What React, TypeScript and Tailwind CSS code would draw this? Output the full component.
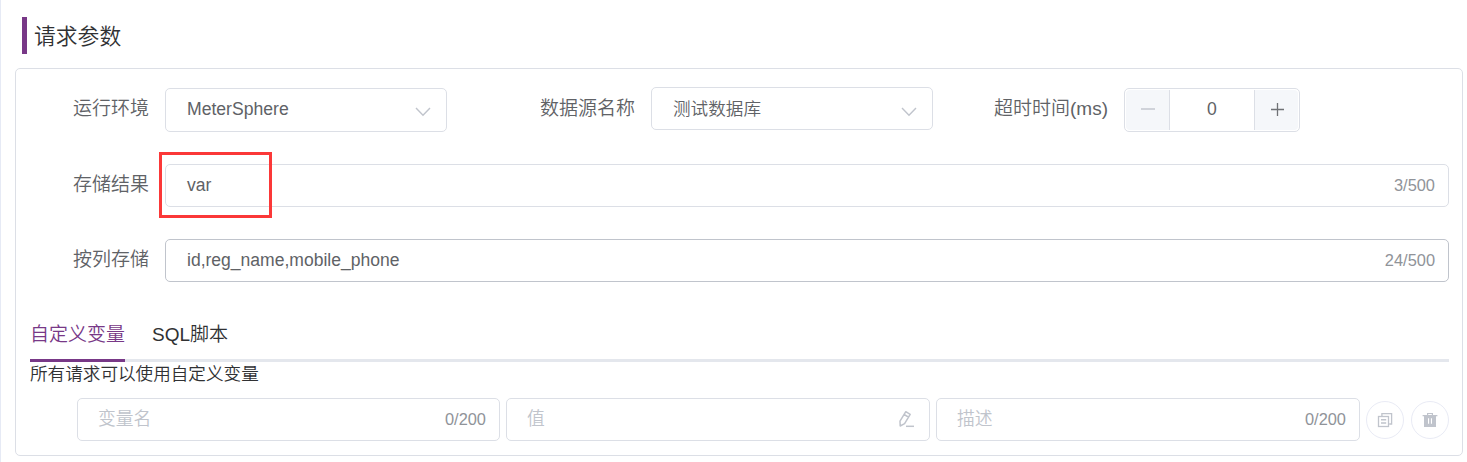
import type { ReactNode } from "react";

function Chevron() {
  return (
    <svg width="16" height="10" viewBox="0 0 16 10" fill="none" stroke="#c0c4cc" strokeWidth="1.4" className="mt-[6px] mr-[15px]">
      <path d="M1 1 L8 8.3 L15 1" />
    </svg>
  );
}

function Label({ children, className = "" }: { children: ReactNode; className?: string }) {
  return <span className={`shrink-0 pt-px text-[19px] leading-[42px] text-[#606266] ${className}`}>{children}</span>;
}

function Select({ value, className }: { value: string; className: string }) {
  return (
    <div className={`flex w-[282px] shrink-0 items-center justify-between rounded-[5px] border border-[#dcdfe6] pl-[21px] text-[17.6px] text-[#606266] ${className}`}>
      <span className="leading-[40px]">{value}</span>
      <Chevron />
    </div>
  );
}

function TextBox({ value, count, className = "border-[#dcdfe6]" }: { value: string; count: string; className?: string }) {
  return (
    <div className={`flex h-[43px] w-[1284px] items-center justify-between rounded-[5px] border pr-[13px] pl-[21px] ${className}`}>
      <span className="text-[17.55px] leading-[41px] text-[#606266]">{value}</span>
      <span className="text-[16.4px] leading-[41px] text-[#909399]">{count}</span>
    </div>
  );
}

function VariableBox({ placeholder, className, children }: { placeholder: string; className: string; children: ReactNode }) {
  return (
    <div className={`flex h-[43px] shrink-0 items-center justify-between rounded-[5px] border border-[#dcdfe6] pr-[13px] pl-[20px] text-[#c0c4cc] ${className}`}>
      <span className="text-[17.8px] leading-[39px]">{placeholder}</span>
      {children}
    </div>
  );
}

function EditIcon() {
  return (
    <svg width="16" height="18" viewBox="0 0 16 18" fill="none" stroke="#c0c4cc" strokeWidth="1.5" strokeLinejoin="round" className="mr-[2px] mb-px">
      <path d="M7.8 1.7 L12.2 4.3 L6.6 13.6 L2.2 16 L2 11.2 Z M6.1 4.5 L10.5 7.1" />
      <path d="M8 16.3 H16" />
    </svg>
  );
}

function CopyIcon() {
  return (
    <svg width="16" height="16" viewBox="0 0 16 16" fill="none" stroke="#c0c4cc" strokeWidth="1.3">
      <path d="M4.9 4 V1.6 H14.6 V12 H12.2" />
      <rect x="1.5" y="4.5" width="10" height="10" />
      <path d="M4 7.8 H9.2 M4 11 H9.2" strokeWidth="1.5" />
    </svg>
  );
}

function TrashIcon() {
  return (
    <svg width="16" height="16" viewBox="0 0 16 16" fill="#c0c4cc" className="mr-px">
      <path fillRule="evenodd" d="M5 1 H11 V3 H15.4 V4.2 H14 V15 H2 V4.2 H0.6 V3 H5 Z M6.2 2 V3 H9.8 V2 Z M6 6.2 V11.8 H7.1 V6.2 Z M8.9 6.2 V11.8 H10 V6.2 Z" />
    </svg>
  );
}

function RoundButton({ children, className = "" }: { children: ReactNode; className?: string }) {
  return (
    <button className={`flex h-[38px] w-[38px] shrink-0 items-center justify-center rounded-full border border-[#e9ebf5] ${className}`}>
      {children}
    </button>
  );
}

export default function App() {
  return (
    <div className="h-[462px] w-[1467px] overflow-hidden border-l border-[#e6eaf5] bg-white pt-[17px] font-['Liberation_Sans','Noto_Sans_CJK_SC',sans-serif]">
      <h1 className="ml-[21px] flex h-[37px] items-center border-l-[5px] border-[#783887] pl-[7px] text-[21.8px] font-[350] text-[#303133]">
        <span className="pt-[2px] leading-[36px]">请求参数</span>
      </h1>

      <section className="mt-[14px] ml-[14px] h-[388px] w-[1448px] rounded-[5px] border border-[#dcdfe6] pl-[14px] font-[350]">
        <div className="flex h-[63px] items-start pt-[18px]">
          <Label className="ml-[43px] w-[92px]">运行环境</Label>
          <Select value="MeterSphere" className="mt-px h-[44px] pb-[2px]" />
          <Label className="ml-[93px] w-[111px]">数据源名称</Label>
          <Select value="测试数据库" className="h-[43px]" />
          <Label className="ml-[61px] w-[130px]">超时时间(ms)</Label>
          <div className="mt-px flex h-[44px] w-[176px] rounded-[5px] border border-[#dcdfe6] p-px text-[#606266]">
            <div className="flex w-[44px] items-center justify-center rounded-l-[4px] border-r border-[#dcdfe6] bg-[#f5f7fa] pb-[2px]">
              <span className="h-[1.5px] w-[14px] bg-[#d0d3da]" />
            </div>
            <div className="flex-1 text-center text-[17.6px] leading-[39px]">0</div>
            <div className="flex w-[44px] items-center justify-center rounded-r-[4px] border-l border-[#dcdfe6] bg-[#f5f7fa] pb-px pl-px">
              <svg width="13" height="13" viewBox="0 0 13 13" stroke="#707276" strokeWidth="1.3">
                <path d="M0 6.5 H13 M6.5 0 V13" />
              </svg>
            </div>
          </div>
        </div>

        <div className="relative mt-[32px] flex h-[43px]">
          <Label className="ml-[43px] w-[92px] -translate-y-px">存储结果</Label>
          <TextBox value="var" count="3/500" />
          <div className="absolute top-[-12px] left-[129px] h-[66px] w-[113px] border-3 border-[#fb3838]" />
        </div>

        <div className="mt-[32px] flex h-[43px]">
          <Label className="ml-[43px] w-[92px] -translate-y-px">按列存储</Label>
          <TextBox value="id,reg_name,mobile_phone" count="24/500" className="border-[#c0c4cc]" />
        </div>

        <nav className="mt-[27px] flex h-[53px] w-[1419px] text-[19px] leading-[52px] text-[#303133] shadow-[inset_0_-3px_0_#e4e7ed]">
          <span className="mr-[27px] w-[95px] border-b-3 border-[#783887] text-[#783887]">自定义变量</span>
          <span>SQL脚本</span>
        </nav>
        <p className="h-[24px] text-[17.6px] leading-[24px] text-[#303133]">所有请求可以使用自定义变量</p>

        <div className="mt-[12px] ml-[47px] flex items-center">
          <VariableBox placeholder="变量名" className="w-[423px]">
            <span className="text-[16.4px] leading-[41px] text-[#909399]">0/200</span>
          </VariableBox>
          <VariableBox placeholder="值" className="ml-[6px] w-[424px]">
            <EditIcon />
          </VariableBox>
          <VariableBox placeholder="描述" className="ml-[6px] w-[424px]">
            <span className="text-[16.4px] leading-[41px] text-[#909399]">0/200</span>
          </VariableBox>
          <RoundButton className="ml-[6px]">
            <CopyIcon />
          </RoundButton>
          <RoundButton className="ml-[7px]">
            <TrashIcon />
          </RoundButton>
        </div>
      </section>
    </div>
  );
}
